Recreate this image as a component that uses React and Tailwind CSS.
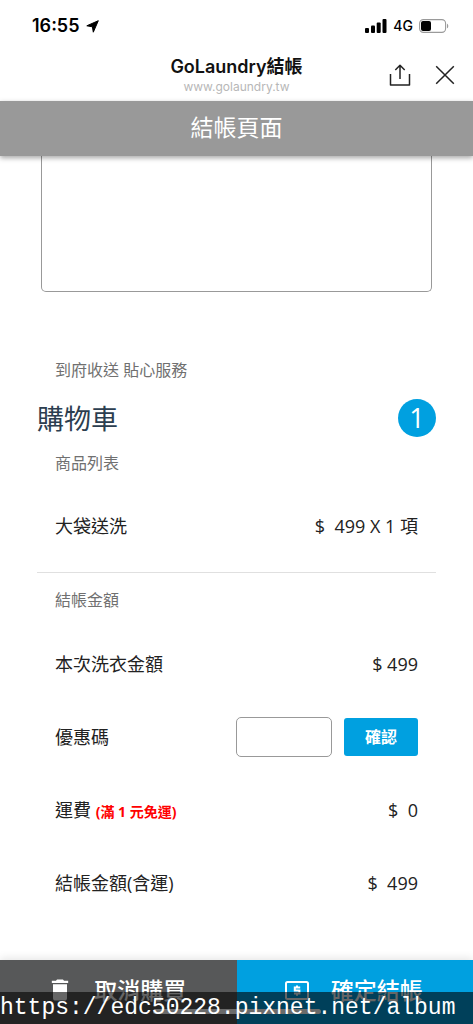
import React, { useState } from 'react';
import { MdDelete } from 'react-icons/md';

const StatusBar = () => (
    <div className="flex h-[46px] items-end justify-between pl-8 pr-6 font-[Inter,sans-serif] text-black">
        <div className="flex h-10 items-center gap-1.5">
            <span className="text-lg font-semibold">16:55</span>
            <svg width="13" height="13" viewBox="0 0 13 13" fill="currentColor" stroke="currentColor" strokeLinejoin="round">
                <path d="M12.3.7.8 5.8l5.6 1 .9 5.4z" />
            </svg>
        </div>
        <div className="flex h-10 items-center gap-1.5">
            <svg width="22" height="14" viewBox="0 0 22 14" fill="currentColor">
                <rect x="0" y="9" width="4" height="5" rx="1" />
                <rect x="6" y="6.5" width="4" height="7.5" rx="1" />
                <rect x="11.7" y="3.5" width="4" height="10.5" rx="1" />
                <rect x="17.5" y="0" width="4" height="14" rx="1" />
            </svg>
            <span className="text-sm font-medium">4G</span>
            <svg width="30" height="14" viewBox="0 0 30 14">
                <rect x="0.6" y="0.6" width="26" height="12.8" rx="3.8" fill="none" stroke="#9a9a9a" strokeWidth="1.1" />
                <rect x="2" y="2" width="10" height="10" rx="2" fill="#000" />
                <path d="M28 4.7c1.7.7 1.7 3.9 0 4.6z" fill="#9a9a9a" />
            </svg>
        </div>
    </div>
);

const BrowserBar = () => (
    <div className="grid h-[55px] grid-cols-[1fr_auto_1fr] items-end px-[18px] pb-1">
        <div className="col-start-2 flex flex-col items-center font-[Inter,'Noto_Sans_CJK_TC',sans-serif]">
            <span className="text-lg leading-5 font-semibold text-[#111]">GoLaundry結帳</span>
            <span className="text-xs leading-5 text-[#b7b7b7]">www.golaundry.tw</span>
        </div>
        <div className="flex h-11 items-center justify-end gap-6 text-[#222]">
            <button type="button" aria-label="分享">
                <svg width="22" height="24" viewBox="0 0 22 24" fill="none" stroke="currentColor" strokeWidth="1.5" strokeLinejoin="round">
                    <path d="M1.5 11v11h19V11M11 16V2.5M6.3 7 11 2.3 15.7 7" />
                </svg>
            </button>
            <button type="button" aria-label="關閉">
                <svg width="20" height="20" viewBox="0 0 20 20" fill="none" stroke="currentColor" strokeWidth="1.5">
                    <path d="m1.2 1.2 17.6 17.6M18.8 1.2 1.2 18.8" />
                </svg>
            </button>
        </div>
    </div>
);

const CashIcon = () => (
    <svg width="28" height="28" viewBox="0 0 28 28" fill="none" stroke="currentColor" strokeWidth="2">
        <rect x="3" y="6" width="22" height="17" rx="1.5" />
        <path d="M17.2 11.5h-5.4v3h4.6v3h-5.4M14 9.5v2M14 17.5v2.2" />
    </svg>
);

const SectionLabel = ({ children }) => (
    <h3 className="flex h-[54px] items-center px-[18px] text-base text-[#707070]">{children}</h3>
);

const Row = ({ label, children }) => (
    <div className="flex h-[73px] items-center justify-between px-[18px] text-lg text-[#222]">
        <div>{label}</div>
        <div className="whitespace-pre">{children}</div>
    </div>
);

export default function App() {
    const [note, setNote] = useState('');
    const [coupon, setCoupon] = useState('');

    return (
        <div className="flex min-h-screen flex-col bg-white font-['Open_Sans','Noto_Sans_CJK_TC',sans-serif]">
            <StatusBar />
            <BrowserBar />

            <header className="z-10 flex h-[55px] items-center justify-center bg-[#999] pb-0.5 shadow-[0_2px_5px_rgba(0,0,0,0.35)]">
                <h1 className="text-[23px] text-white">結帳頁面</h1>
            </header>

            <main className="flex-1 px-[37px]">
                <div className="px-1">
                    <textarea
                        aria-label="備註"
                        value={note}
                        onChange={(e) => setNote(e.target.value)}
                        className="block h-[136px] w-full resize-none rounded-b-[5px] border border-t-0 border-[#999] p-3 outline-none"
                    />
                </div>

                <div className="mt-[51px]">
                    <SectionLabel>到府收送 貼心服務</SectionLabel>
                </div>
                <div className="flex h-10 items-end justify-between">
                    <h2 className="text-[27px] leading-9 text-[#2c3e50]">購物車</h2>
                    <span className="flex size-[38px] items-center justify-center rounded-full bg-[#00a0e0] text-[27px] text-white">1</span>
                </div>

                <h3 className="flex h-[52px] items-center px-[18px] text-base text-[#707070]">商品列表</h3>
                <Row label="大袋送洗">{'$  499 X 1 項'}</Row>

                <hr className="mt-2.5 border-[#e0e0e0]" />

                {/* 結帳金額 */}
                <SectionLabel>結帳金額</SectionLabel>
                <Row label="本次洗衣金額">$ 499</Row>
                <Row label={<label htmlFor="coupon">優惠碼</label>}>
                    <div className="flex items-center gap-3">
                        <input
                            id="coupon"
                            type="text"
                            value={coupon}
                            onChange={(e) => setCoupon(e.target.value)}
                            className="h-10 w-24 rounded-[5px] border border-[#999] px-2 outline-none"
                        />
                        <button type="button" className="h-[38px] w-[74px] rounded-[3px] bg-[#00a0e0] text-base font-bold text-white">
                            確認
                        </button>
                    </div>
                </Row>
                <Row
                    label={
                        <>
                            運費 <span className="text-sm font-bold text-[#f00]">(滿 1 元免運)</span>
                        </>
                    }
                >
                    {'$  0'}
                </Row>
                <Row label="結帳金額(含運)">{'$  499'}</Row>
            </main>

            <footer className="relative grid h-16 grid-cols-2 text-[23px] font-medium text-white shadow-[0_-2px_8px_rgba(0,0,0,0.1)]">
                <button type="button" className="flex items-center justify-center gap-5 bg-[#575859] pr-1 pb-1">
                    <MdDelete size={28} />
                    取消購買
                </button>
                <button type="button" className="flex items-center justify-center gap-5 bg-[#00a0e0] pr-1 pb-1">
                    <CashIcon />
                    確定結帳
                </button>
                <div className="absolute inset-x-0 bottom-0 flex h-8 items-center justify-center bg-black/60 pt-1.5">
                    <div className="h-[5px] w-[168px] rounded-full bg-[#6b6b6b]" />
                </div>
                <p className="absolute bottom-0 left-0 font-['Liberation_Mono',monospace] text-[23px] leading-8 font-normal text-white">
                    https://edc50228.pixnet.net/album
                </p>
            </footer>
        </div>
    );
}
